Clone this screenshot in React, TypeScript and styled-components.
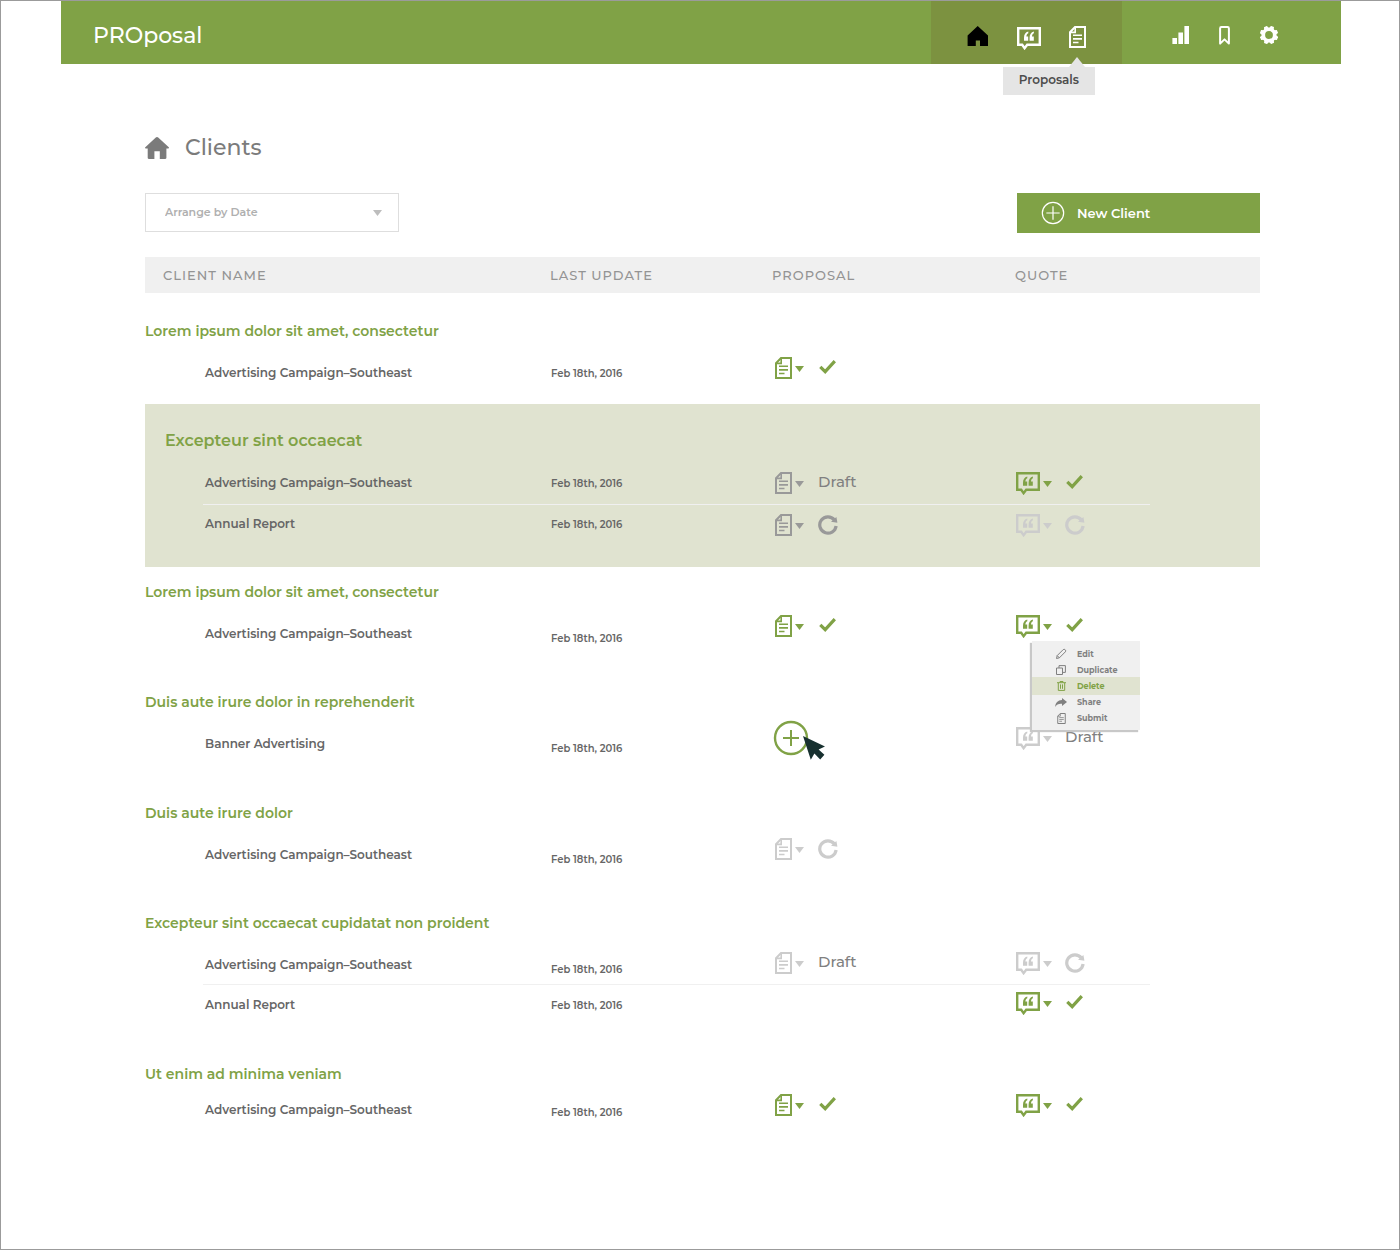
import React, { useState } from 'react';
import styled, { createGlobalStyle, css } from 'styled-components';

const green = '#80a246';
const tones = { green, gray: '#999999', light: '#cccccc' };
type Tone = keyof typeof tones;

const GlobalStyle = createGlobalStyle`
  *, *::before, *::after { box-sizing: border-box; }
  body {
    margin: 0;
    background: #ffffff;
    color: #666666;
    font-family: Montserrat, Inter, 'Open Sans', sans-serif;
    font-weight: 500;
  }
  button, select { font: inherit; }
  svg { display: block; flex: none; }
`;

/* ---------- icons ---------- */

const DocIcon = ({ width = 17, height = 22 }: { width?: number; height?: number }) => (
  <svg width={width} height={height} viewBox="0 0 17 22" fill="none" stroke="currentColor" aria-hidden="true">
    <path d="M6 1H16V21H1V6.2Z" strokeWidth="2" />
    <path d="M6.2 1V6.4H1" strokeWidth="1.6" />
    <path d="M4 9.2H13M4 12.9H13M4 16.5H9.5" strokeWidth="1.6" />
  </svg>
);

const QuoteIcon = () => (
  <svg width="24" height="24" viewBox="0 -1 24 24" aria-hidden="true">
    <path d="M1.2 1.2H22.8V17.8H10.2L7.6 21.2L5.2 17.8H1.2Z" fill="none" stroke="currentColor" strokeWidth="2.4" />
    <path
      d="M11.3 4.6C8.4 5.3 7 7.6 7 10.8V13.8H11.2V9.6H9.4C9.5 7.9 10 6.8 11.3 6.2ZM16.9 4.6C14 5.3 12.6 7.6 12.6 10.8V13.8H16.8V9.6H15C15.1 7.9 15.6 6.8 16.9 6.2Z"
      fill="currentColor"
    />
  </svg>
);

const CaretIcon = () => (
  <svg width="9" height="6" viewBox="0 0 9 6" aria-hidden="true">
    <path d="M0 0H9L4.5 6Z" fill="currentColor" />
  </svg>
);

const CheckIcon = () => (
  <svg width="20" height="18" viewBox="0 0 20 18" role="img" aria-label="Approved">
    <path d="M2.3 7.9L7.2 12.7L16.8 2.2" fill="none" stroke="currentColor" strokeWidth="3.2" />
  </svg>
);

const RefreshIcon = () => (
  <svg width="20" height="20" viewBox="0 0 20 20" role="img" aria-label="In revision">
    <path d="M16.4 4.9A8.2 8.2 0 1 0 18.1 11" fill="none" stroke="currentColor" strokeWidth="3.2" />
    <path d="M18.4 2L19.4 7.8L13 6.8Z" fill="currentColor" />
  </svg>
);

const RoofIcon = () => (
  <svg width="24" height="22" viewBox="0 0 24 22" aria-hidden="true">
    <path
      d="M12 0C12.5 0 12.9 .2 13.2 .5L23.8 10.2C24.2 10.7 24 11.5 23.2 11.5H21.4V20.8C21.4 21.5 21 22 20.3 22H14.8V14.2H9.4V22H3.8C3.1 22 2.7 21.5 2.7 20.8V11.5H.8C0 11.5-.2 10.7 .3 10.2L10.8 .5C11.1 .2 11.5 0 12 0Z"
      fill="currentColor"
    />
  </svg>
);

const HomeIcon = () => (
  <svg width="22" height="20" viewBox="0 0 22 20" aria-hidden="true">
    <path d="M10.7 0L21 9.4V20H13V14.6H8.8V20H.6V9.4Z" fill="currentColor" />
  </svg>
);

const BarsIcon = () => (
  <svg width="17" height="18" viewBox="0 0 17 18" aria-hidden="true">
    <path d="M.4 12H5V18H.4ZM6.4 6.6H11V18H6.4ZM12.4 0H17V18H12.4Z" fill="currentColor" />
  </svg>
);

const BookmarkIcon = () => (
  <svg width="11" height="19" viewBox="0 0 11 19" aria-hidden="true">
    <path d="M2.4 1H8.6Q9.9 1 9.9 2.4V17.6L5.5 13.4L1.1 17.6V2.4Q1.1 1 2.4 1Z" fill="none" stroke="currentColor" strokeWidth="2" strokeLinejoin="round" />
  </svg>
);

const GearIcon = () => (
  <svg width="18" height="18" viewBox="0 0 18 18" aria-hidden="true">
    <circle cx="9" cy="9" r="5.7" fill="none" stroke="currentColor" strokeWidth="3.6" />
    {[22, 67, 112, 157, 202, 247, 292, 337].map((a) => (
      <path key={a} d="M6.4 3L7.4 -.2H10.6L11.6 3Z" fill="currentColor" transform={`rotate(${a} 9 9)`} />
    ))}
  </svg>
);

const PlusCircleIcon = ({ size, ring, bar }: { size: number; ring: number; bar: number }) => (
  <svg width={size} height={size} viewBox="0 0 36 36" fill="none" stroke="currentColor" aria-hidden="true">
    <circle cx="18" cy="18" r="16" strokeWidth={ring} />
    <path d={`M18 ${18 - bar}V${18 + bar}M${18 - bar} 18H${18 + bar}`} strokeWidth={ring > 2 ? 2 : ring} />
  </svg>
);

const PencilIcon = () => (
  <svg width="12" height="12" viewBox="0 0 12 12" fill="none" stroke="currentColor" aria-hidden="true">
    <path d="M1.5 10.5L2.2 7.6L8.2 1.6Q9.2.8 10.2 1.8T10.4 3.8L4.4 9.8ZM2.2 7.6L4.4 9.8" />
  </svg>
);

const DuplicateIcon = () => (
  <svg width="10" height="10" viewBox="0 0 10 10" fill="none" stroke="currentColor" aria-hidden="true">
    <path d="M.5 3H6.5V9.5H.5ZM3 3V.6H9.4V7.4H6.5" />
  </svg>
);

const TrashIcon = () => (
  <svg width="9" height="10" viewBox="0 0 9 10" fill="none" stroke="currentColor" aria-hidden="true">
    <path d="M0 1.7H9M3 1.5V.5H6V1.5M1.3 2V9.4H7.7V2M3.5 3.4V7.8M5.5 3.4V7.8" />
  </svg>
);

const ShareIcon = () => (
  <svg width="12" height="9" viewBox="0 0 12 9" aria-hidden="true">
    <path d="M7 0L12 4L7 8V5.8C4 5.5 1.6 6.2 .2 9C.4 4.8 2.8 2.3 7 2.1Z" fill="currentColor" />
  </svg>
);

const PointerIcon = () => (
  <svg width="24" height="25" viewBox="0 0 24 25" aria-hidden="true">
    <path d="M0 0L22 10.6L15.6 13.4L21.4 18.8L17.2 23.4L11.4 17.6L7.8 23.8Z" fill="#17302f" />
  </svg>
);

/* ---------- page frame ---------- */

const Page = styled.div`
  min-height: 100vh;
  padding: 0 58px 0 60px;
  border: 1px solid #9b9b9b;
`;

const TopBar = styled.header`
  display: flex;
  align-items: stretch;
  height: 63px;
  padding: 0 63px 0 32px;
  background: ${green};
  color: #ffffff;
`;

const Brand = styled.a`
  margin-right: auto;
  align-self: center;
  padding-top: 6px;
  color: inherit;
  font-size: 22px;
  line-height: 28px;
  text-decoration: none;
`;

const Nav = styled.nav<{ $shaded?: boolean }>`
  display: flex;
  align-items: flex-start;
  gap: ${(p) => (p.$shaded ? 28 : 30)}px;
  padding: ${(p) => (p.$shaded ? '25px 36px 0' : '25px 0 0 50px')};
  ${(p) => p.$shaded && css`background: #7c9240;`}
`;

const NavLink = styled.a<{ $current?: boolean }>`
  position: relative;
  display: block;
  color: ${(p) => (p.$current ? '#000000' : '#ffffff')};
`;

const Tooltip = styled.span`
  position: absolute;
  top: 100%;
  right: -9px;
  margin-top: 19px;
  padding: 5px 16px 7px;
  background: #e5e5e5;
  color: #4d4d4d;
  font-size: 12px;
  font-weight: 600;
  line-height: 16px;

  &::before {
    content: '';
    position: absolute;
    right: 10px;
    bottom: 100%;
    border: 8px solid transparent;
    border-top-width: 0;
    border-bottom: 10px solid #e5e5e5;
  }
`;

const Main = styled.main`
  padding: 69px 81px 0 84px;
`;

const Heading = styled.h1`
  display: flex;
  align-items: center;
  gap: 16px;
  margin: 0 0 31px;
  color: #7b7b7b;
  font-size: 22px;
  font-weight: 500;
  line-height: 29px;
`;

const Toolbar = styled.div`
  display: flex;
  justify-content: space-between;
  margin-bottom: 24px;
`;

const SelectBox = styled.label`
  display: grid;
  align-items: center;
  width: 254px;
  height: 39px;
  color: #bdbdbd;

  > * { grid-area: 1 / 1; }
  > svg { justify-self: end; margin-right: 17px; pointer-events: none; }
`;

const Select = styled.select`
  width: 100%;
  height: 100%;
  padding: 0 40px 1px 19px;
  appearance: none;
  border: 1px solid #dedede;
  border-radius: 0;
  background: #ffffff;
  color: #b0b0b0;
  font-size: 11px;
  font-weight: 600;
`;

const NewButton = styled.button`
  display: flex;
  align-items: center;
  gap: 12px;
  width: 243px;
  height: 40px;
  padding: 0 24px;
  border: 0;
  background: ${green};
  color: #ffffff;
  font-size: 13px;
  font-weight: 600;
`;

/* ---------- client table ---------- */

const Table = styled.table`
  width: 100%;
  table-layout: fixed;
  border-collapse: separate;
  border-spacing: 0;
  text-align: left;
`;

const Col = styled.col<{ $width?: number }>`
  width: ${(p) => (p.$width ? `${p.$width}px` : 'auto')};
`;

const ColumnHead = styled.th<{ $inset?: boolean }>`
  height: 36px;
  padding: 0 0 0 ${(p) => (p.$inset ? 18 : 0)}px;
  background: #f0f0f0;
  color: #949494;
  font-size: 13px;
  font-weight: 500;
  letter-spacing: 1px;
`;

const Group = styled.tbody<{ $active?: boolean }>`
  ${(p) => p.$active && css`background: #e0e3d0;`}
`;

const GroupTitle = styled.th<{ $height: number; $active?: boolean }>`
  height: ${(p) => p.$height}px;
  padding: 0 0 0 ${(p) => (p.$active ? 20 : 0)}px;
  color: ${green};
  font-size: ${(p) => (p.$active ? 16 : 14)}px;
  font-weight: 600;
  line-height: ${(p) => (p.$active ? 18 : 20)}px;
  vertical-align: bottom;
`;

const Row = styled.tr<{ $height: number }>`
  height: ${(p) => p.$height}px;
`;

const Cell = styled.td<{ $top?: number; $rule?: string; $left?: number }>`
  padding: ${(p) => p.$top ?? 0}px 0 0 ${(p) => p.$left ?? 0}px;
  border-bottom: ${(p) => (p.$rule ? `1px solid ${p.$rule}` : '0')};
  font-size: 12px;
  font-weight: 600;
  line-height: 20px;
  vertical-align: top;
`;

const DateText = styled.time`
  display: block;
  font-size: 10px;
`;

const Actions = styled.div<{ $gap: number; $tall?: boolean }>`
  display: flex;
  align-items: center;
  gap: ${(p) => p.$gap}px;
  height: ${(p) => (p.$tall ? 36 : 24)}px;
`;

const Anchor = styled.div`
  position: relative;
`;

const IconButton = styled.button<{ $tone: Tone }>`
  display: flex;
  align-items: center;
  gap: 3px;
  padding: 0;
  border: 0;
  background: none;
  color: ${(p) => tones[p.$tone]};
  cursor: pointer;

  > svg:last-child { margin-top: 2px; }
`;

const AddButton = styled.button`
  position: relative;
  display: block;
  padding: 0;
  border: 0;
  background: none;
  color: ${green};
`;

const Pointer = styled.span`
  position: absolute;
  left: 30px;
  top: 16px;
`;

const Status = styled.span<{ $tone: Tone }>`
  color: ${(p) => tones[p.$tone]};
`;

const DraftText = styled.span`
  padding-bottom: 3px;
  color: #808080;
  font-size: 15px;
  font-weight: 500;
`;

const Menu = styled.ul`
  position: absolute;
  z-index: 1;
  left: 16px;
  top: 100%;
  width: 108px;
  margin: 3px 0 0;
  padding: 5px 0 4px;
  list-style: none;
  background: #f0f0f0;
  box-shadow: -2px 2px 1px #c8c8c8;
`;

const MenuButton = styled.button<{ $active?: boolean }>`
  display: grid;
  grid-template-columns: 12px 1fr;
  align-items: center;
  justify-items: center;
  column-gap: 10px;
  width: 100%;
  height: 16px;
  padding: 0 0 0 23px;
  border: 0;
  background: ${(p) => (p.$active ? '#e0e3d0' : 'none')};
  box-shadow: ${(p) => (p.$active ? '0 0 0 1px #e0e3d0' : 'none')};
  clip-path: inset(-1px 0);
  color: ${(p) => (p.$active ? green : '#808080')};
  font-size: 8px;
  font-weight: 700;
  line-height: 16px;

  > span { justify-self: start; }
`;

/* ---------- data ---------- */

type State = 'check' | 'refresh' | 'draft' | 'add';
type Mark = { state: State; tone?: Tone; menu?: boolean };
type Item = {
  name: string;
  height: number;
  tops: [number, number, number];
  proposal?: Mark;
  quote?: Mark;
  rule?: string;
};
type Client = { title: string; head: number; active?: boolean; items: Item[] };

const campaign = 'Advertising Campaign–Southeast';

const clients: Client[] = [
  {
    title: 'Lorem ipsum dolor sit amet, consectetur',
    head: 48,
    items: [{ name: campaign, height: 63, tops: [22, 23, 15], proposal: { state: 'check', tone: 'green' } }],
  },
  {
    title: 'Excepteur sint occaecat',
    head: 46,
    active: true,
    items: [
      { name: campaign, height: 55, tops: [23, 24, 21], rule: '#f0f0f0', proposal: { state: 'draft', tone: 'gray' }, quote: { state: 'check', tone: 'green' } },
      { name: 'Annual Report', height: 62, tops: [9, 10, 8], proposal: { state: 'refresh', tone: 'gray' }, quote: { state: 'refresh', tone: 'light' } },
    ],
  },
  {
    title: 'Lorem ipsum dolor sit amet, consectetur',
    head: 35,
    items: [{ name: campaign, height: 75, tops: [22, 27, 12], proposal: { state: 'check', tone: 'green' }, quote: { state: 'check', tone: 'green', menu: true } }],
  },
  {
    title: 'Duis aute irure dolor in reprehenderit',
    head: 35,
    items: [{ name: 'Banner Advertising', height: 76, tops: [22, 27, 8], proposal: { state: 'add' }, quote: { state: 'draft', tone: 'light' } }],
  },
  {
    title: 'Duis aute irure dolor',
    head: 35,
    items: [{ name: campaign, height: 75, tops: [22, 27, 14], proposal: { state: 'refresh', tone: 'light' } }],
  },
  {
    title: 'Excepteur sint occaecat cupidatat non proident',
    head: 35,
    items: [
      { name: campaign, height: 52, tops: [22, 27, 18], rule: '#f0f0f0', proposal: { state: 'draft', tone: 'light' }, quote: { state: 'refresh', tone: 'light' } },
      { name: 'Annual Report', height: 64, tops: [10, 11, 6], quote: { state: 'check', tone: 'green' } },
    ],
  },
  {
    title: 'Ut enim ad minima veniam',
    head: 35,
    items: [{ name: campaign, height: 75, tops: [16, 19, 9], proposal: { state: 'check', tone: 'green' }, quote: { state: 'check', tone: 'green' } }],
  },
];

const menuItems = [
  { label: 'Edit', icon: <PencilIcon /> },
  { label: 'Duplicate', icon: <DuplicateIcon /> },
  { label: 'Delete', icon: <TrashIcon /> },
  { label: 'Share', icon: <ShareIcon /> },
  { label: 'Submit', icon: <DocIcon width={9} height={11} /> },
];

const MarkView = ({ mark, kind, tall }: { mark: Mark; kind: 'Proposal' | 'Quote'; tall?: boolean }) => {
  const [open, setOpen] = useState(!!mark.menu);
  if (mark.state === 'add') {
    return (
      <Actions $gap={0} $tall={tall}>
        <AddButton type="button" aria-label="Add proposal">
          <PlusCircleIcon size={36} ring={2.4} bar={8} />
          <Pointer><PointerIcon /></Pointer>
        </AddButton>
      </Actions>
    );
  }
  const tone = mark.tone ?? 'green';
  return (
    <Actions $gap={kind === 'Quote' ? 13 : 14} $tall={tall}>
      <Anchor>
        <IconButton type="button" $tone={tone} aria-label={`${kind} options`} onClick={() => mark.menu && setOpen(!open)}>
          {kind === 'Quote' ? <QuoteIcon /> : <DocIcon />}
          <CaretIcon />
        </IconButton>
        {mark.menu && open && (
          <Menu>
            {menuItems.map((m) => (
              <li key={m.label}>
                <MenuButton type="button" $active={m.label === 'Delete'}>
                  {m.icon}
                  <span>{m.label}</span>
                </MenuButton>
              </li>
            ))}
          </Menu>
        )}
      </Anchor>
      {mark.state === 'draft' ? (
        <DraftText>Draft</DraftText>
      ) : (
        <Status $tone={tone}>{mark.state === 'check' ? <CheckIcon /> : <RefreshIcon />}</Status>
      )}
    </Actions>
  );
};

export default function App() {
  return (
    <>
      <GlobalStyle />
      <Page>
        <TopBar>
          <Brand href="#">PROposal</Brand>
          <Nav $shaded aria-label="Main">
            <NavLink href="#clients" $current aria-label="Clients"><HomeIcon /></NavLink>
            <NavLink href="#quotes" aria-label="Quotes"><QuoteIcon /></NavLink>
            <NavLink href="#proposals">
              <DocIcon />
              <Tooltip>Proposals</Tooltip>
            </NavLink>
          </Nav>
          <Nav aria-label="Tools">
            <NavLink href="#reports" aria-label="Reports"><BarsIcon /></NavLink>
            <NavLink href="#saved" aria-label="Saved"><BookmarkIcon /></NavLink>
            <NavLink href="#settings" aria-label="Settings"><GearIcon /></NavLink>
          </Nav>
        </TopBar>
        <Main>
          <Heading><RoofIcon />Clients</Heading>
          <Toolbar>
            <SelectBox>
              <Select aria-label="Arrange clients" defaultValue="date">
                <option value="date">Arrange by Date</option>
              </Select>
              <CaretIcon />
            </SelectBox>
            <NewButton type="button"><PlusCircleIcon size={24} ring={1.8} bar={10} />New Client</NewButton>
          </Toolbar>
          <Table>
            <colgroup>
              <Col $width={58} />
              <Col />
              <Col $width={222} />
              <Col $width={243} />
              <Col $width={135} />
              <Col $width={110} />
            </colgroup>
            <thead>
              <tr>
                <ColumnHead $inset colSpan={2}>CLIENT NAME</ColumnHead>
                <ColumnHead>LAST UPDATE</ColumnHead>
                <ColumnHead>PROPOSAL</ColumnHead>
                <ColumnHead colSpan={2}>QUOTE</ColumnHead>
              </tr>
            </thead>
            {clients.map((c, i) => (
              <Group key={i} $active={c.active}>
                <tr>
                  <GroupTitle colSpan={6} $height={c.head} $active={c.active}>{c.title}</GroupTitle>
                </tr>
                {c.items.map((r, j) => {
                  const tall = r.proposal?.state === 'add';
                  return (
                    <Row key={j} $height={r.height}>
                      <Cell />
                      <Cell $rule={r.rule} $top={r.tops[0]} $left={2}>{r.name}</Cell>
                      <Cell $rule={r.rule} $top={r.tops[1]} $left={1}>
                        <DateText dateTime="2016-02-18">Feb 18th, 2016</DateText>
                      </Cell>
                      <Cell $rule={r.rule} $top={r.tops[2]} $left={tall ? 1 : 3}>
                        {r.proposal && <MarkView mark={r.proposal} kind="Proposal" tall={tall} />}
                      </Cell>
                      <Cell $rule={r.rule} $top={r.tops[2]} $left={1}>
                        {r.quote && <MarkView mark={r.quote} kind="Quote" tall={tall} />}
                      </Cell>
                      <Cell />
                    </Row>
                  );
                })}
              </Group>
            ))}
          </Table>
        </Main>
      </Page>
    </>
  );
}
